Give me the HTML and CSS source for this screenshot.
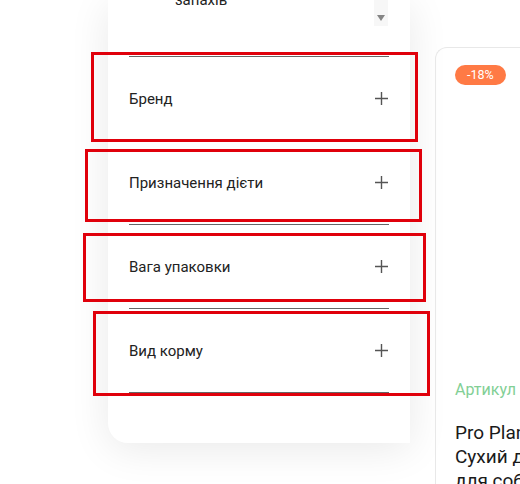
FILE: index.html
```html
<!DOCTYPE html>
<html lang="uk">
<head>
  <meta charset="UTF-8">
  <title>Каталог</title>
  <link rel="stylesheet" href="styles.css">
</head>
<body>

<div id="page">
  <aside id="filters">
    <div class="filter-top">
      <span class="option-label">запахів</span>
      <div class="scroll">
        <span class="scroll-arrow"></span>
      </div>
    </div>

    <div class="filter-item">
      <span>Бренд</span>
      <svg class="plus" width="13" height="13" viewBox="0 0 13 13"><path d="M6.5 0v13M0 6.5h13"/></svg>
    </div>
    <div class="filter-item">
      <span>Призначення дієти</span>
      <svg class="plus" width="13" height="13" viewBox="0 0 13 13"><path d="M6.5 0v13M0 6.5h13"/></svg>
    </div>
    <div class="filter-item">
      <span>Вага упаковки</span>
      <svg class="plus" width="13" height="13" viewBox="0 0 13 13"><path d="M6.5 0v13M0 6.5h13"/></svg>
    </div>
    <div class="filter-item last">
      <span>Вид корму</span>
      <svg class="plus" width="13" height="13" viewBox="0 0 13 13"><path d="M6.5 0v13M0 6.5h13"/></svg>
    </div>
  </aside>

  <div id="product">
    <span class="badge">-18%</span>
    <div class="photo"></div>
    <div class="sku">Артикул</div>
    <div class="title">Pro Plan<br>Сухий для<br>для собак</div>
  </div>
</div>

<div class="mark mark-1"></div>
<div class="mark mark-2"></div>
<div class="mark mark-3"></div>
<div class="mark mark-4"></div>

</body>
</html>
```

FILE: styles.css
```css
body {
  margin: 0;
  padding: 0;
  background: #fff;
  font-family: Roboto, "Liberation Sans", sans-serif;
  color: #222;
  overflow: hidden;
}

#page {
  display: flex;
  align-items: flex-start;
  gap: 25px;
  padding-left: 108px;
}

#filters {
  width: 260px;
  padding: 0 21px 50px;
  background: #fff;
  border-radius: 0 0 0 20px;
  box-shadow: 0 6px 40px rgba(0, 0, 0, 0.09);
}

.filter-top {
  height: 56px;
  display: flex;
  justify-content: space-between;
  align-items: flex-start;
}

.option-label {
  margin: -10px 0 0 46px;
  font-size: 15px;
  line-height: 20px;
}

.scroll {
  width: 14px;
  height: 26px;
  margin-right: 1px;
  background: #f7f7f7;
  display: flex;
  justify-content: center;
  align-items: flex-end;
}

.scroll-arrow {
  width: 0;
  height: 0;
  margin-bottom: 5px;
  border-left: 4.5px solid transparent;
  border-right: 4.5px solid transparent;
  border-top: 6px solid #858585;
}

.filter-item {
  height: 83px;
  border-top: 1px solid #666;
  display: flex;
  justify-content: space-between;
  align-items: center;
  font-size: 15px;
}

.filter-item.last {
  border-bottom: 1px solid #666;
}

.plus {
  margin-right: 1px;
  stroke: #555;
  stroke-width: 1.4;
  fill: none;
}

#product {
  flex: 1;
  margin-top: 47px;
  height: 460px;
  padding: 16px 0 0 19px;
  border: 1px solid #e8e8e8;
  border-right: none;
  border-radius: 12px 0 0 0;
  white-space: nowrap;
  overflow: hidden;
}

.badge {
  display: inline-block;
  height: 20px;
  line-height: 20px;
  padding: 0 12px;
  border-radius: 10px;
  background: #ff7a45;
  color: #fff;
  font-size: 12.5px;
}

.photo {
  height: 295px;
}

.sku {
  color: #82cf95;
  font-size: 16px;
  line-height: 20px;
}

.title {
  margin-top: 21px;
  font-size: 19px;
  line-height: 24px;
  color: #1a1a1a;
}

.mark {
  position: absolute;
  border: 3px solid #e0000b;
  box-sizing: border-box;
}

.mark-1 { left: 91px; top: 52px; width: 327px; height: 90px; }
.mark-2 { left: 85px; top: 149px; width: 337px; height: 73px; }
.mark-3 { left: 83px; top: 233px; width: 343px; height: 69px; }
.mark-4 { left: 93px; top: 311px; width: 337px; height: 85px; }
```
